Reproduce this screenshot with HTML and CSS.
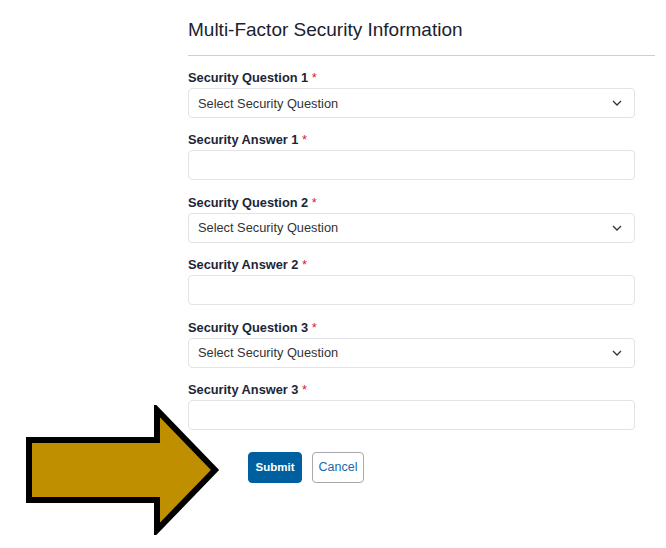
FILE: index.html
```html
<!DOCTYPE html>
<html>
<head>
<meta charset="utf-8">
<link rel="stylesheet" href="styles.css">
</head>
<body>
<div class="page">
  <h1 class="title">Multi-Factor Security Information</h1>
  <hr class="rule">
  <form class="form">
    <div class="field">
      <label class="label">Security Question 1 <span class="req">*</span></label>
      <div class="select"><span>Select Security Question</span><svg class="chev" width="10" height="6" viewBox="0 0 10 6"><path d="M1 1l4 4 4-4" fill="none" stroke="#333" stroke-width="1.3"/></svg></div>
    </div>
    <div class="field">
      <label class="label">Security Answer 1 <span class="req">*</span></label>
      <div class="input"></div>
    </div>
    <div class="field">
      <label class="label">Security Question 2 <span class="req">*</span></label>
      <div class="select"><span>Select Security Question</span><svg class="chev" width="10" height="6" viewBox="0 0 10 6"><path d="M1 1l4 4 4-4" fill="none" stroke="#333" stroke-width="1.3"/></svg></div>
    </div>
    <div class="field">
      <label class="label">Security Answer 2 <span class="req">*</span></label>
      <div class="input"></div>
    </div>
    <div class="field">
      <label class="label">Security Question 3 <span class="req">*</span></label>
      <div class="select"><span>Select Security Question</span><svg class="chev" width="10" height="6" viewBox="0 0 10 6"><path d="M1 1l4 4 4-4" fill="none" stroke="#333" stroke-width="1.3"/></svg></div>
    </div>
    <div class="field">
      <label class="label">Security Answer 3 <span class="req">*</span></label>
      <div class="input"></div>
    </div>
    <div class="actions">
      <button type="button" class="btn btn-primary">Submit</button>
      <button type="button" class="btn btn-outline">Cancel</button>
    </div>
  </form>
</div>
<svg class="arrow" width="200" height="130" viewBox="0 0 200 130">
  <polygon points="3,35 131,35 131,5 189,65 131,125 131,95 3,95" fill="#bf8f00" stroke="#000" stroke-width="6" stroke-linejoin="miter"/>
</svg>
</body>
</html>
```
FILE: styles.css
```css
html, body {
  margin: 0;
  padding: 0;
  background: #fff;
}
body {
  width: 666px;
  height: 548px;
  position: relative;
  overflow: hidden;
  font-family: "Liberation Sans", Arial, sans-serif;
}
.page {
  padding: 18px 11px 0 188px;
}
.title {
  margin: 0;
  font-size: 19px;
  font-weight: normal;
  color: #1b2230;
  line-height: 24px;
}
.rule {
  border: 0;
  border-top: 1px solid #cfcfcf;
  margin: 13px 0 14px 0;
}
.form {
  width: 447px;
  display: flex;
  flex-direction: column;
}
.field {
  display: flex;
  flex-direction: column;
  margin-bottom: 14.4px;
}
.label {
  font-size: 12.8px;
  font-weight: bold;
  color: #1c2537;
  line-height: 16px;
  margin-bottom: 2px;
}
.req {
  color: #e0212a;
  font-weight: normal;
}
.select, .input {
  box-sizing: border-box;
  height: 30px;
  border: 1px solid #e1e3e6;
  border-radius: 4px;
  background: #fff;
}
.select {
  display: flex;
  align-items: center;
  justify-content: space-between;
  padding: 0 12px 0 9px;
  font-size: 12.8px;
  color: #333;
}
.actions {
  display: flex;
  gap: 10px;
  padding-left: 60px;
  margin-top: 7.6px;
}
.btn {
  height: 31px;
  box-sizing: border-box;
  border-radius: 4px;
  font-family: "Liberation Sans", Arial, sans-serif;
  font-size: 11.5px;
  font-weight: bold;
  padding: 0;
}
.btn-primary {
  background: #005f9e;
  color: #fff;
  border: 1px solid #005f9e;
  width: 54px;
}
.btn-outline {
  background: #fff;
  color: #1b6aa8;
  border: 1px solid #a8a8ad;
  width: 52px;
  font-size: 12.5px;
  font-weight: normal;
}
.arrow {
  position: absolute;
  left: 26px;
  top: 405px;
}
```
